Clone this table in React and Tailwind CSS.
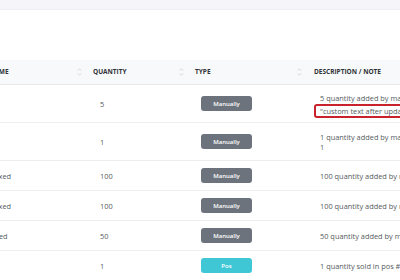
import React from "react";

const SortIcon = () => (
  <svg width="5" height="10" viewBox="0 0 5 10" className="shrink-0">
    <path d="M0.8 3.6 L2.5 1.8 L4.2 3.6" fill="none" stroke="#c9cdd3" strokeWidth="0.8" />
    <path d="M0.8 6.4 L2.5 8.2 L4.2 6.4" fill="none" stroke="#c9cdd3" strokeWidth="0.8" />
  </svg>
);

const Badge = ({ kind }) =>
  kind === "pos" ? (
    <div className="w-[51px] h-[15px] rounded-[3px] bg-[#3fc7d6] text-white text-[6px] font-semibold flex items-center justify-center">
      Pos
    </div>
  ) : (
    <div className="w-[51px] h-[15px] rounded-[3px] bg-[#6c737c] text-white text-[6px] font-semibold flex items-center justify-center">
      Manually
    </div>
  );

const rows = [
  { name: "", qty: "5", kind: "m", h: "h-[38px]", desc: "5 quantity added by manually", note: "\"custom text after update\"", box: true },
  { name: "", qty: "1", kind: "m", h: "h-[38px]", desc: "1 quantity added by manually", note: "1" },
  { name: "Mixed", qty: "100", kind: "m", h: "h-[30px]", desc: "100 quantity added by manually" },
  { name: "Mixed", qty: "100", kind: "m", h: "h-[30px]", desc: "100 quantity added by manually" },
  { name: "Used", qty: "50", kind: "m", h: "h-[30px]", desc: "50 quantity added by manually" },
  { name: "", qty: "1", kind: "pos", h: "h-[30px]", desc: "1 quantity sold in pos #1001" },
];

export default function App() {
  return (
    <div
      className="w-[400px] h-[280px] overflow-hidden bg-white"
      style={{ fontFamily: "'Open Sans', 'Liberation Sans', sans-serif" }}
    >
      <div className="h-[10px] bg-[#f5f5fa] border-b border-[#eeeef4]" />
      <div className="h-[50px]" />
      <div className="ml-[-23px] w-[540px]">
        <div className="grid grid-cols-[110px_102px_119px_209px] h-[25px] bg-[#f8f9fb] border-b border-[#e7e9ed] text-[6.5px] font-bold text-[#2f3337]">
          <div className="flex items-center justify-between pl-[12px] pr-[5px]">
            <span>NAME</span>
            <SortIcon />
          </div>
          <div className="flex items-center justify-between pl-[6px] pr-[5px]">
            <span>QUANTITY</span>
            <SortIcon />
          </div>
          <div className="flex items-center justify-between pl-[6px] pr-[6px]">
            <span>TYPE</span>
            <SortIcon />
          </div>
          <div className="flex items-center pl-[6px]">
            <span>DESCRIPTION / NOTE</span>
          </div>
        </div>
        {rows.map((r, i) => (
          <div
            key={i}
            className={`grid grid-cols-[110px_102px_119px_209px] ${r.h} border-b border-[#eceef1] text-[7.4px] text-[#555a60] leading-[10px]`}
          >
            <div className="flex items-center pl-[13px] whitespace-nowrap">{r.name}</div>
            <div className="flex items-center pl-[13px]">{r.qty}</div>
            <div className="flex items-center pl-[12px]">
              <Badge kind={r.kind} />
            </div>
            <div className="flex items-center pl-[12px] whitespace-nowrap">
              <div className={r.box ? "mt-[3px]" : ""}>
                <div>{r.desc}</div>
                {r.note &&
                  (r.box ? (
                    <div className="ml-[-6px] mt-[1px] pl-[4px] pr-[10px] border-2 border-[#c8232c] rounded-[3px] leading-[10px]">
                      {r.note}
                    </div>
                  ) : (
                    <div>{r.note}</div>
                  ))}
              </div>
            </div>
          </div>
        ))}
      </div>
    </div>
  );
}
